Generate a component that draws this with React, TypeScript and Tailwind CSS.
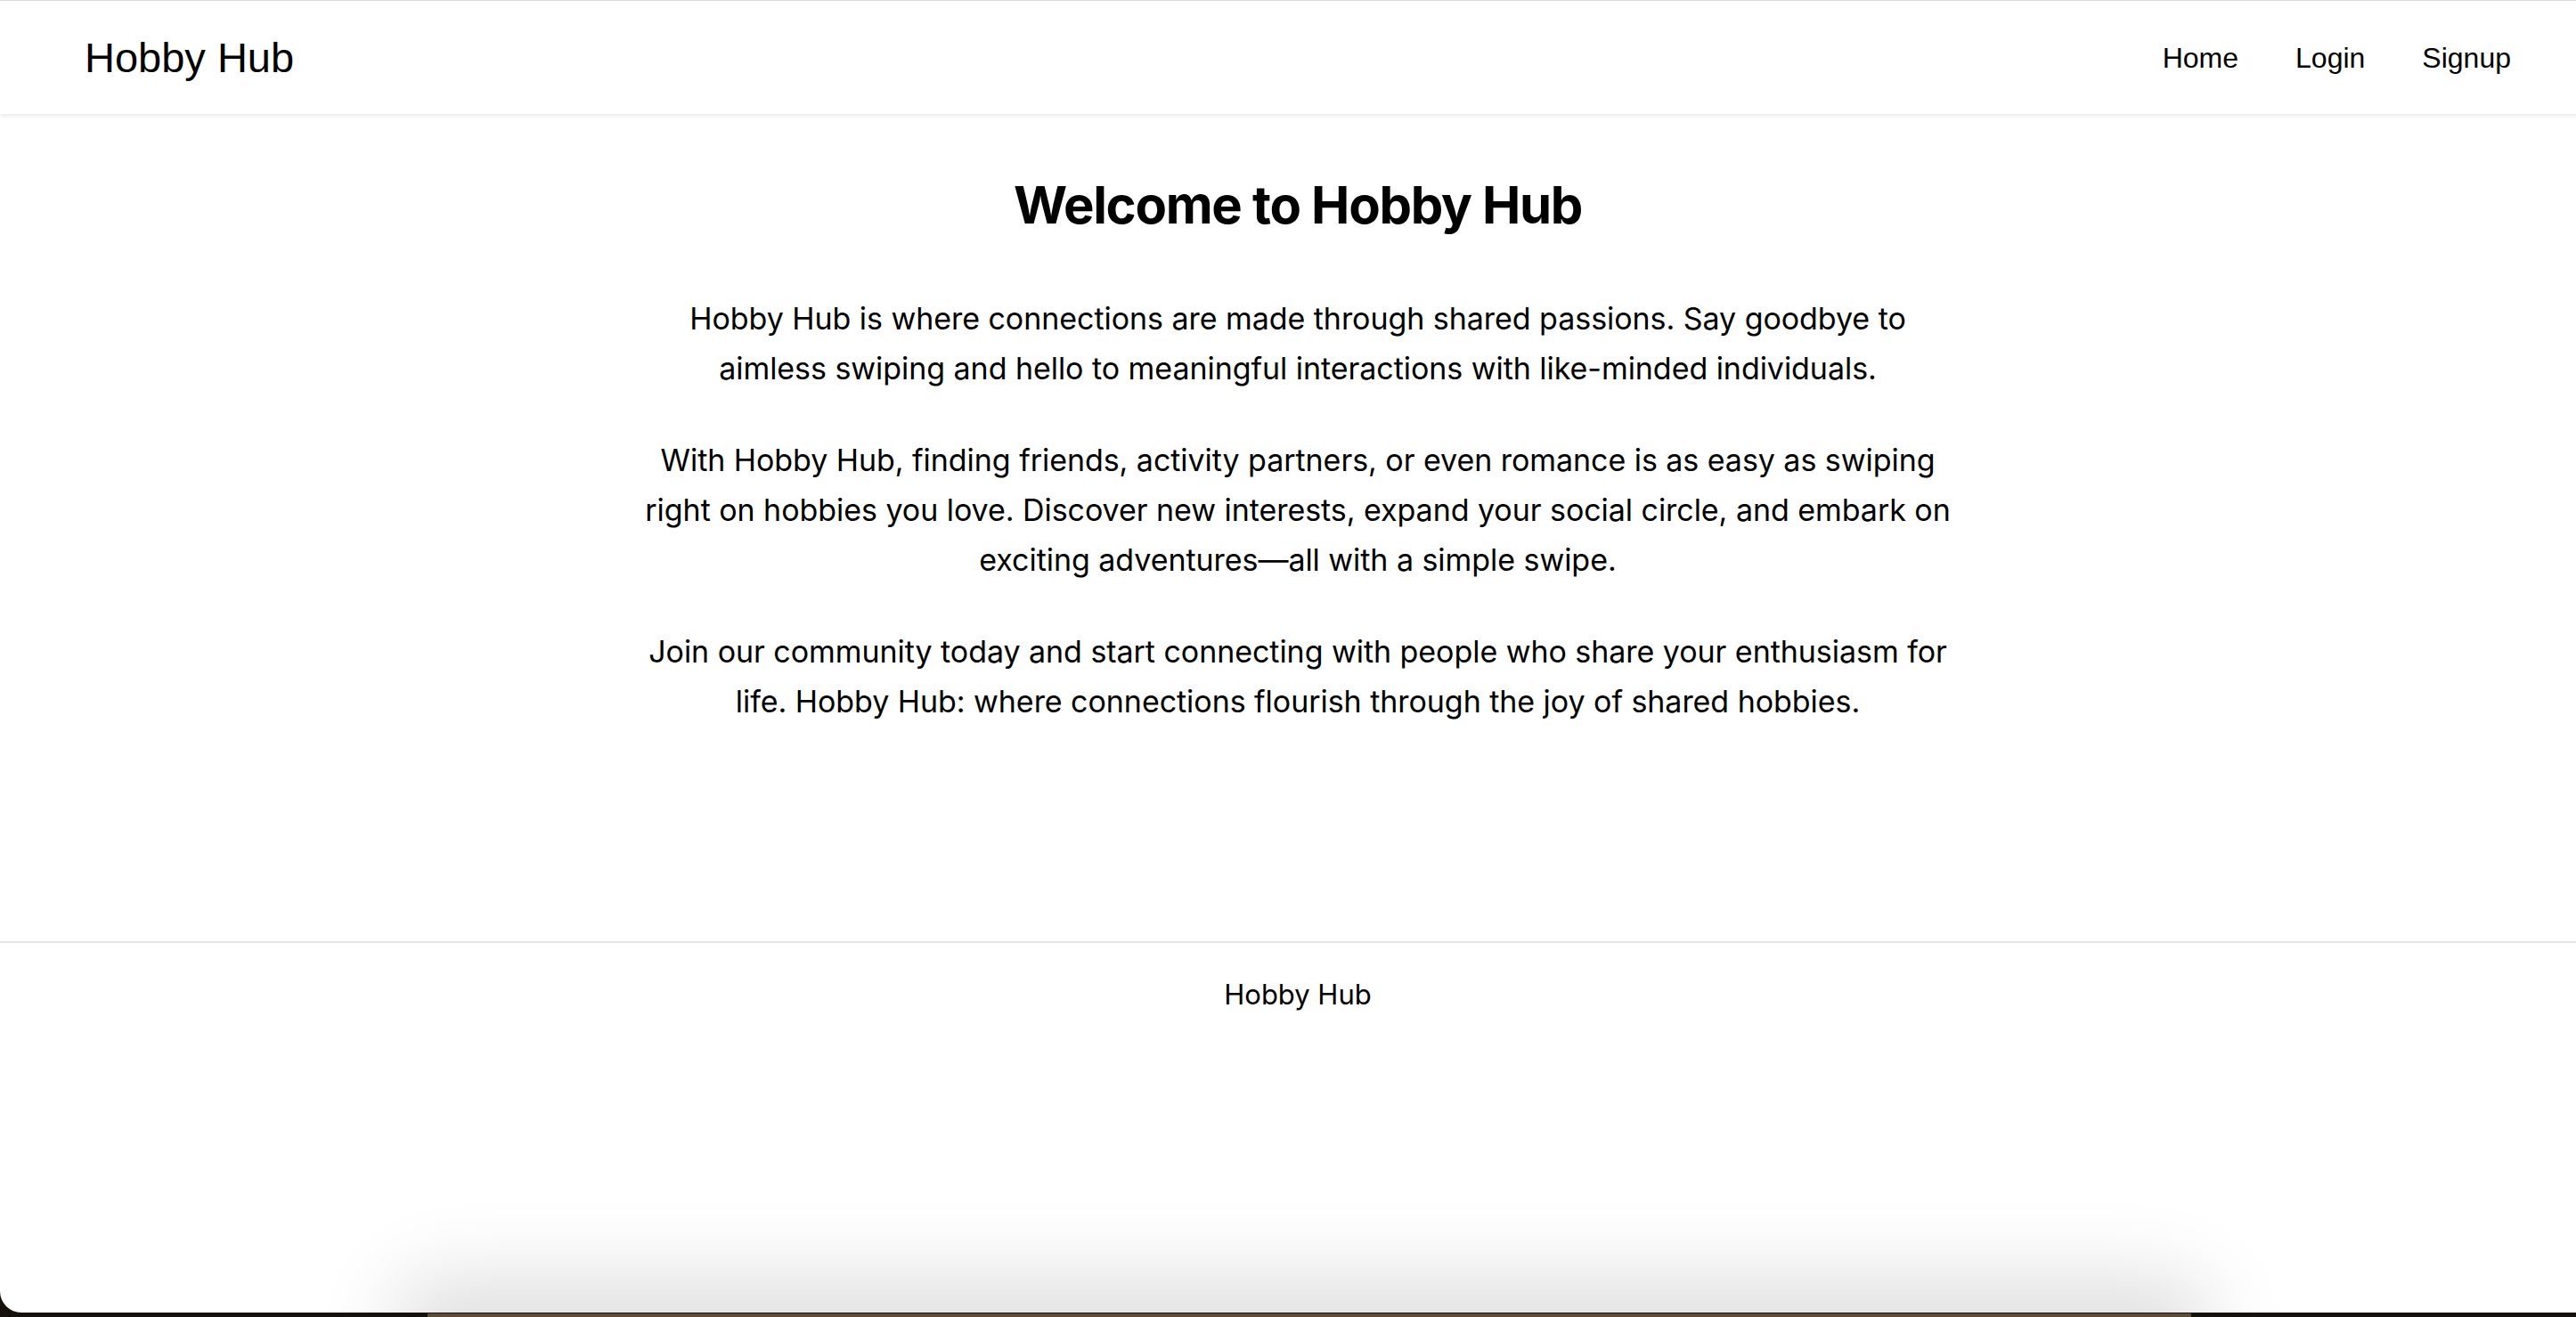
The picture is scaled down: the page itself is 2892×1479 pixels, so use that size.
import React from 'react';

const navLinks = ['Home', 'Login', 'Signup'];

const paragraphs = [
  'Hobby Hub is where connections are made through shared passions. Say goodbye to aimless swiping and hello to meaningful interactions with like-minded individuals.',
  'With Hobby Hub, finding friends, activity partners, or even romance is as easy as swiping right on hobbies you love. Discover new interests, expand your social circle, and embark on exciting adventures—all with a simple swipe.',
  'Join our community today and start connecting with people who share your enthusiasm for life. Hobby Hub: where connections flourish through the joy of shared hobbies.',
];

function Header() {
  return (
    <header className="relative z-10 flex h-[127px] items-center justify-between bg-white px-[95px] shadow-[0_2px_5px_rgba(0,0,0,0.09)]">
      <span className="font-['Liberation_Sans',Arial,sans-serif] text-[47px] leading-none text-black">Hobby Hub</span>
      <nav className="flex items-center gap-[64px] font-['Liberation_Sans',Arial,sans-serif] text-[32px] leading-none text-black">
        {navLinks.map((l) => (
          <a key={l} href="#" className="hover:underline">
            {l}
          </a>
        ))}
      </nav>
    </header>
  );
}

export default function App() {
  return (
    <div className="relative h-screen w-full overflow-hidden bg-[#16110c]">
      <div className="relative h-[1474px] w-[calc(100%+22px)] overflow-hidden rounded-bl-[24px] border-t border-[#dcdcdc] bg-white font-['Inter','Noto_Sans',sans-serif] text-black">
        <Header />
        <main className="flex min-h-[929px] flex-col items-center px-8 pt-[66px] text-center">
          <h1 className="text-[58px] font-bold leading-[72px] tracking-[-1.3px]">Welcome to Hobby Hub</h1>
          <div className="mt-[64px] flex max-w-[1470px] flex-col gap-[47px] text-[34px] leading-[56px] tracking-[-0.05px]">
            {paragraphs.map((p, i) => (
              <p key={i}>{p}</p>
            ))}
          </div>
        </main>
        <footer className="border-t-2 border-[#e6e6ea] pt-[34px] text-center text-[31px] leading-[48px]">
          Hobby Hub
        </footer>
        {/* soft shadow cast from below the window */}
        <div className="pointer-events-none absolute bottom-[-40px] left-[480px] right-[470px] h-[40px] rounded-[40px] shadow-[0_0_90px_40px_rgba(0,0,0,0.13)]" />
      </div>
      <div className="absolute bottom-0 left-[480px] h-[4px] w-[1980px] bg-[#5c4d3a]" />
    </div>
  );
}
